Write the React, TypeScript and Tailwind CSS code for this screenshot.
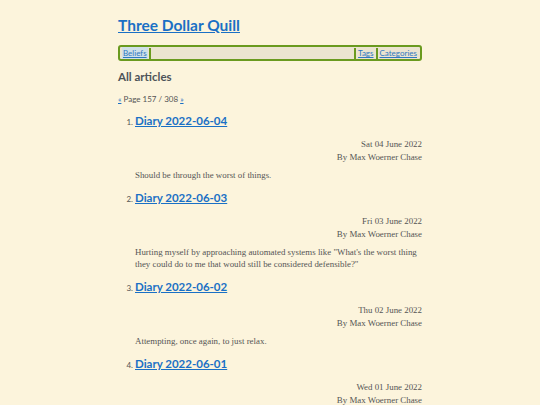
const articles = [
  {
    n: 1,
    title: "Diary 2022-06-04",
    date: "Sat 04 June 2022",
    summary: "Should be through the worst of things.",
  },
  {
    n: 2,
    title: "Diary 2022-06-03",
    date: "Fri 03 June 2022",
    summary:
      "Hurting myself by approaching automated systems like \"What's the worst thing they could do to me that would still be considered defensible?\"",
  },
  {
    n: 3,
    title: "Diary 2022-06-02",
    date: "Thu 02 June 2022",
    summary: "Attempting, once again, to just relax.",
  },
  {
    n: 4,
    title: "Diary 2022-06-01",
    date: "Wed 01 June 2022",
    summary: "",
  },
];

const sans = "font-['Lato','Open_Sans',sans-serif]";
const serif = "font-['Liberation_Serif','DejaVu_Serif',serif]";

const App = () => {
  return (
    <div className="h-[405px] overflow-hidden bg-[#fcf4dc] text-[#555]">
      <div className="w-[304px] mx-auto pt-[15px]">
        <h1 className={`${sans} text-[15.5px] leading-[20px] font-bold`}>
          <a href="#" className="text-[#1a70c5] underline">
            Three Dollar Quill
          </a>
        </h1>
        <nav
          className={`${sans} mt-[10px] h-[16px] flex items-center border-2 border-[#6a9a1f] rounded-[3px] bg-[#ebe4d0] text-[8px] px-[2px]`}
        >
          <a href="#" className="text-[#2f78c0] underline bg-[#cfe0e8] px-px">
            Beliefs
          </a>
          <span className="w-[2px] h-[11px] bg-[#6a9a1f] mx-px" />
          <span className="flex-1" />
          <span className="w-[2px] h-[11px] bg-[#6a9a1f] mx-px" />
          <a href="#" className="text-[#2f78c0] underline px-px">
            Tags
          </a>
          <span className="w-[2px] h-[11px] bg-[#6a9a1f] mx-px" />
          <a href="#" className="text-[#2f78c0] underline px-px">
            Categories
          </a>
        </nav>
        <h2 className={`${sans} mt-[8px] text-[11.5px] leading-[16px] font-bold text-[#4d5358]`}>
          All articles
        </h2>
        <p className={`${sans} mt-[9px] text-[8px] leading-[10px] text-[#555]`}>
          <a href="#" className="text-[#1a70c5] underline">«</a> Page 157 / 308{" "}
          <a href="#" className="text-[#1a70c5] underline">»</a>
        </p>
        <ol className="mt-[7px]">
          {articles.map((a) => (
            <li key={a.n} className="flex flex-col">
              <div className="flex items-baseline">
                <span className={`${sans} w-[17px] text-right pr-[2px] text-[8px] text-[#555]`}>
                  {a.n}.
                </span>
                <a
                  href="#"
                  className={`${sans} text-[11.5px] leading-[20px] font-bold text-[#1a70c5] underline`}
                >
                  {a.title}
                </a>
              </div>
              <div className={`${serif} mt-[7px] text-right text-[8.9px] leading-[13px] text-[#555]`}>
                <div>{a.date}</div>
                <div>By Max Woerner Chase</div>
              </div>
              {a.summary && (
                <p className={`${serif} ml-[17px] mt-[5px] mb-[7px] text-[8.9px] leading-[12px] text-[#555]`}>
                  {a.summary}
                </p>
              )}
            </li>
          ))}
        </ol>
      </div>
    </div>
  );
};

export default App;
